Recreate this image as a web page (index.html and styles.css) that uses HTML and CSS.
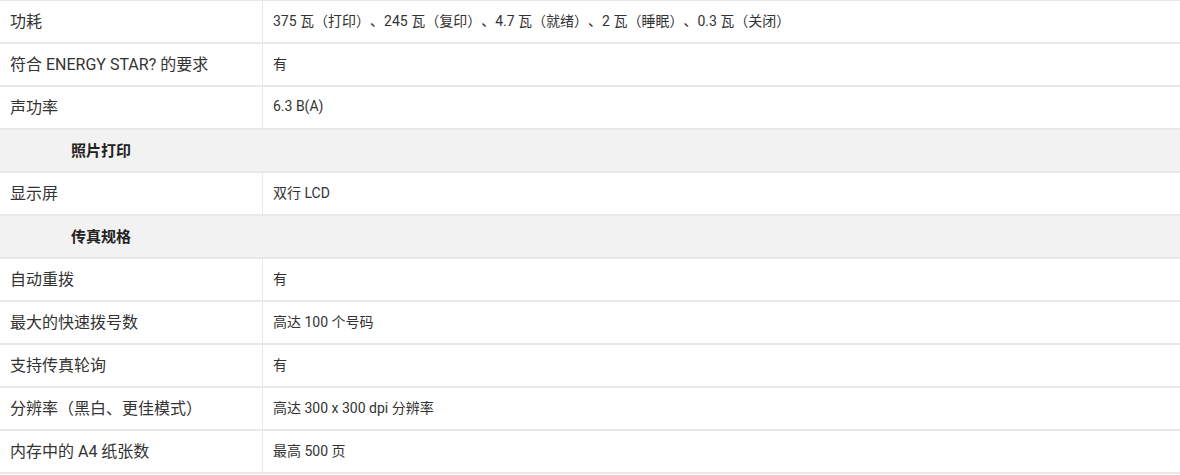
FILE: index.html
```html
<!DOCTYPE html>
<html lang="zh-CN">
<head>
    <meta charset="UTF-8">
    <title>规格</title>
    <link rel="stylesheet" href="styles.css">
</head>
<body>
    <table class="specs">
        <tr><td class="name">功耗</td><td class="value">375 瓦（打印）、245 瓦（复印）、4.7 瓦（就绪）、2 瓦（睡眠）、0.3 瓦（关闭）</td></tr>
        <tr><td class="name">符合 ENERGY STAR? 的要求</td><td class="value">有</td></tr>
        <tr><td class="name">声功率</td><td class="value">6.3 B(A)</td></tr>
        <tr class="section"><td colspan="2">照片打印</td></tr>
        <tr><td class="name">显示屏</td><td class="value">双行 LCD</td></tr>
        <tr class="section"><td colspan="2">传真规格</td></tr>
        <tr><td class="name">自动重拨</td><td class="value">有</td></tr>
        <tr><td class="name">最大的快速拨号数</td><td class="value">高达 100 个号码</td></tr>
        <tr><td class="name">支持传真轮询</td><td class="value">有</td></tr>
        <tr><td class="name">分辨率（黑白、更佳模式）</td><td class="value">高达 300 x 300 dpi 分辨率</td></tr>
        <tr><td class="name">内存中的 A4 纸张数</td><td class="value">最高 500 页</td></tr>
    </table>
</body>
</html>
```

FILE: styles.css
```css
body {
    margin: 0;
    padding: 0;
    background: white;
    font-family: Roboto, "Noto Sans CJK SC", sans-serif;
    color: #333;
    text-spacing-trim: space-all;
}
.specs {
    width: 1180px;
    border-collapse: collapse;
    border-top: 1px solid #e8e8e8;
}
.specs td {
    height: 38px;
    padding: 0 0 3px 0;
    border-bottom: 2px solid #e8e8e8;
    vertical-align: middle;
}
.name {
    width: 252px;
    padding-left: 10px !important;
    font-size: 16px;
    border-right: 1px solid #e8e8e8;
}
.value {
    padding-left: 10px !important;
    font-size: 14px;
}
.section td {
    background-color: #f2f2f2;
    padding-left: 71px !important;
    font-size: 15px;
    font-weight: bold;
    color: #222;
}
```
